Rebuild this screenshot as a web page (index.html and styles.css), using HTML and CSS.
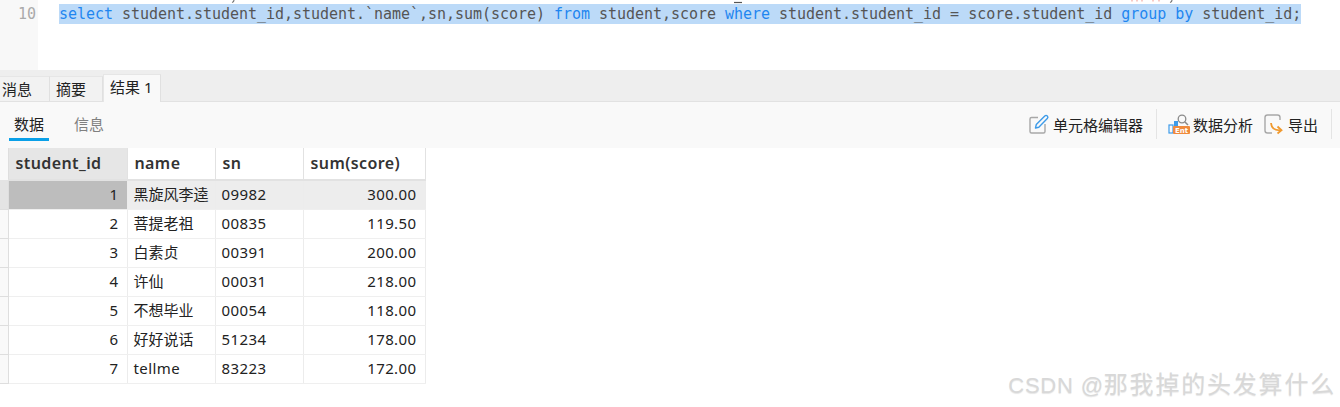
FILE: index.html
```html
<!DOCTYPE html>
<html lang="en">

<head>
  <meta charset="UTF-8">
  <meta name="viewport" content="width=device-width, initial-scale=1.0">
  <title>Query result</title>
  <link rel="stylesheet" href="styles.css">
</head>

<body>

  <div class="editor">
    <div class="gutter">10</div>
    <div class="code">
      <!-- bottoms of the previous line, scrolled out of view -->
      <svg class="prev-line" width="1242" height="4" viewBox="0 0 1242 4" fill="none">
        <path d="M175 0C175 1 174.500 2 173 2.500" stroke="#777" stroke-width="1.200"/>
        <path d="M675 2.500H683" stroke="#555" stroke-width="1.200"/>
        <path d="M1073 0V1.500M1078 0V1.500M1083 0V1.500M1094 0V1.500M1100 0V1.500" stroke="#f4a79e" stroke-width="1.200"/>
        <path d="M1113 0C1113 1 1112.500 2 1111 2.500" stroke="#777" stroke-width="1.200"/>
      </svg>
      <pre class="line"><span class="selected"><span class="kw">select</span> student.student_id,student.`name`,sn,sum(score) <span class="kw">from</span> student,score <span class="kw">where</span> student.student_id = score.student_id <span class="kw">group</span> <span class="kw">by</span> student_id;</span></pre>
    </div>
  </div>

  <div class="tabs">
    <div class="tab first">消息</div>
    <div class="tab">摘要</div>
    <div class="tab active">结果 1</div>
  </div>

  <div class="toolbar">
    <div class="subtab active">数据</div>
    <div class="subtab">信息</div>

    <div class="tools">
      <div class="tool">
        <svg width="22" height="22" viewBox="0 0 22 22" fill="none">
          <path d="M10 4.500H3.500A1.500 1.500 0 0 0 2 6V18.500A1.500 1.500 0 0 0 3.500 20H15.500A1.500 1.500 0 0 0 17 18.500V11" stroke="#a8a8a8" stroke-width="1.400"/>
          <path d="M7.500 15L8.300 11.500L16.800 3A1.600 1.600 0 0 1 19.300 5.500L10.800 14.200Z" stroke="#3d9be9" stroke-width="1.400" stroke-linejoin="round"/>
        </svg>
        <span>单元格编辑器</span>
      </div>
      <div class="sep"></div>
      <div class="tool">
        <svg width="22" height="22" viewBox="0 0 22 22" fill="none">
          <rect x="1" y="12" width="4" height="8" stroke="#3d9be9" stroke-width="1.200"/>
          <rect x="6" y="8" width="4" height="6" fill="#3d9be9"/>
          <circle cx="14" cy="6" r="3.800" stroke="#8a8a8a" stroke-width="1.300"/>
          <path d="M17 9L20 12" stroke="#8a8a8a" stroke-width="1.500"/>
          <rect x="5" y="13" width="17" height="8" rx="1" fill="#f08a3c"/>
          <text x="13.500" y="20" class="ent">Ent</text>
        </svg>
        <span>数据分析</span>
      </div>
      <div class="tool export">
        <svg width="22" height="22" viewBox="0 0 22 22" fill="none">
          <path d="M9 20H4.500A2.500 2.500 0 0 1 2 17.500V4.500A2.500 2.500 0 0 1 4.500 2H14.500A2.500 2.500 0 0 1 17 4.500V7" stroke="#a8a8a8" stroke-width="1.400"/>
          <path d="M8 10C8.500 15 11.500 17.500 17 17.300" stroke="#f0992e" stroke-width="1.800"/>
          <path d="M14.500 13.500L18.500 17.300L14.500 20.500" stroke="#f0992e" stroke-width="1.800"/>
        </svg>
        <span>导出</span>
      </div>
      <div class="sep last"></div>
    </div>
  </div>

  <div class="results">
    <table class="grid">
      <thead>
        <tr>
          <th class="marker"></th>
          <th class="current">student_id</th>
          <th class="col-name">name</th>
          <th class="col-sn">sn</th>
          <th class="col-sum">sum(score)</th>
        </tr>
      </thead>
      <tbody>
        <tr class="selected-row">
          <td class="marker"></td>
          <td class="num current">1</td>
          <td>黑旋风李逵</td>
          <td class="latin">09982</td>
          <td class="num">300.00</td>
        </tr>
        <tr>
          <td class="marker"></td>
          <td class="num">2</td>
          <td>菩提老祖</td>
          <td class="latin">00835</td>
          <td class="num">119.50</td>
        </tr>
        <tr>
          <td class="marker"></td>
          <td class="num">3</td>
          <td>白素贞</td>
          <td class="latin">00391</td>
          <td class="num">200.00</td>
        </tr>
        <tr>
          <td class="marker"></td>
          <td class="num">4</td>
          <td>许仙</td>
          <td class="latin">00031</td>
          <td class="num">218.00</td>
        </tr>
        <tr>
          <td class="marker"></td>
          <td class="num">5</td>
          <td>不想毕业</td>
          <td class="latin">00054</td>
          <td class="num">118.00</td>
        </tr>
        <tr>
          <td class="marker"></td>
          <td class="num">6</td>
          <td>好好说话</td>
          <td class="latin">51234</td>
          <td class="num">178.00</td>
        </tr>
        <tr>
          <td class="marker"></td>
          <td class="num">7</td>
          <td class="latin">tellme</td>
          <td class="latin">83223</td>
          <td class="num">172.00</td>
        </tr>
      </tbody>
    </table>

    <div class="watermark"><span class="wm-latin">CSDN @</span>那我掉的头发算什么</div>
  </div>

</body>

</html>
```

FILE: styles.css
```css
* {
  box-sizing: border-box;
  margin: 0;
  padding: 0;
}

body {
  background: #fff;
  color: #222;
  font-family: 'Noto Sans', 'Noto Sans CJK SC', sans-serif;
  font-size: 15px;
  overflow: hidden;
}

/* editor */
.editor {
  display: flex;
  height: 70px;
  overflow: hidden;
}

.gutter {
  width: 38px;
  background: #f8f8f8;
  color: #aaa;
  font-family: 'DejaVu Sans Mono', monospace;
  font-size: 15px;
  line-height: 20px;
  padding-top: 4px;
  padding-right: 2px;
  text-align: right;
}

.code {
  padding-left: 21px;
  font-family: 'DejaVu Sans Mono', monospace;
  font-size: 15px;
  letter-spacing: -0.03px;
  color: #555;
}

.prev-line {
  display: block;
}

.code pre {
  font: inherit;
  height: 20px;
  line-height: 20px;
}

.selected {
  display: inline-block;
  height: 20px;
  background: #bcdaf8;
}

.kw {
  color: #1f86f0;
}

/* result tabs */
.tabs {
  display: flex;
  align-items: flex-end;
  height: 32px;
  background: #eee;
  border-bottom: 1px solid #e2e2e2;
}

.tab {
  height: 25px;
  width: 53px;
  background: #f2f2f2;
  border-right: 1px solid #e0e0e0;
  border-top: 1px solid #e6e6e6;
  padding-left: 6px;
  line-height: 24px;
}

.tab.first {
  width: 50px;
  padding-left: 2px;
}

.tab.active {
  width: 58px;
  height: 28px;
  margin-bottom: -1px;
  background: #f9f9f9;
  border-left: 1px solid #e6e6e6;
  border-right: 1px solid #e0e0e0;
  line-height: 24px;
}

/* toolbar */
.toolbar {
  display: flex;
  height: 46px;
  background: #f9f9f9;
  padding-left: 9px;
}

.subtab {
  width: 40px;
  height: 39px;
  margin-right: 20px;
  text-align: center;
  line-height: 45px;
  color: #808080;
}

.subtab.active {
  color: #222;
  border-bottom: 3px solid #0aa0e8;
}

.tools {
  display: flex;
  align-items: center;
  margin-left: auto;
  height: 32px;
  margin-top: 6px;
  padding-right: 8px;
}

.tool {
  display: flex;
  align-items: center;
  gap: 3px;
}

.tool.export {
  margin-left: 10px;
}

.sep {
  width: 1px;
  height: 30px;
  background: #e4e4e4;
  margin: 0 11px 0 13px;
}

.sep.last {
  margin: 0 0 0 13px;
}

.ent {
  font-family: 'DejaVu Sans', sans-serif;
  font-size: 7px;
  font-weight: 700;
  fill: #fff;
  text-anchor: middle;
}

/* data grid */
.results {
  position: relative;
  height: 259px;
}

.grid {
  border-collapse: collapse;
  table-layout: fixed;
  width: 425px;
}

.grid th,
.grid td {
  height: 29px;
  padding: 0 6px 2px;
  border-right: 1px solid #ececec;
  border-bottom: 1px solid #efefef;
  font-weight: 400;
  text-align: left;
  white-space: nowrap;
  overflow: hidden;
}

.grid th {
  height: 32px;
  padding: 0 6px 1px 7px;
  font-size: 16px;
  font-weight: 600;
  letter-spacing: 0.400px;
  color: #333;
  border-right: 1px solid #e2e2e2;
  border-bottom: 2px solid #e2e2e2;
}

.grid .marker {
  width: 8px;
  padding: 0;
  background: #f9f9f9;
  border-right: 1px solid #dedede;
  border-bottom: 1px solid #dedede;
}

.grid th.marker {
  background: #f9f9f9;
  border-bottom: 0;
}

.grid th.current {
  width: 119px;
  background: #e6e6e6;
}

.grid .col-name,
.grid .col-sn {
  width: 88px;
}

.grid .col-sum {
  width: 122px;
}

.grid td.latin,
.grid td.num {
  letter-spacing: 0.400px;
}

.grid td.num {
  text-align: right;
  padding-right: 8px;
}

.selected-row td {
  background: #ededed;
}

.grid .selected-row .marker {
  background: #e4e4e4;
}

.grid td.current {
  background: #bdbdbd;
}

.watermark {
  position: absolute;
  right: 4px;
  bottom: 7px;
  color: #d8d8d8;
  font-size: 24px;
  line-height: 28px;
  letter-spacing: 1.800px;
  white-space: nowrap;
  text-shadow: 0 1px 1px #e6e6e6;
}

.wm-latin {
  font-family: 'Liberation Sans', sans-serif;
  font-size: 22px;
  letter-spacing: 0.800px;
}
```
